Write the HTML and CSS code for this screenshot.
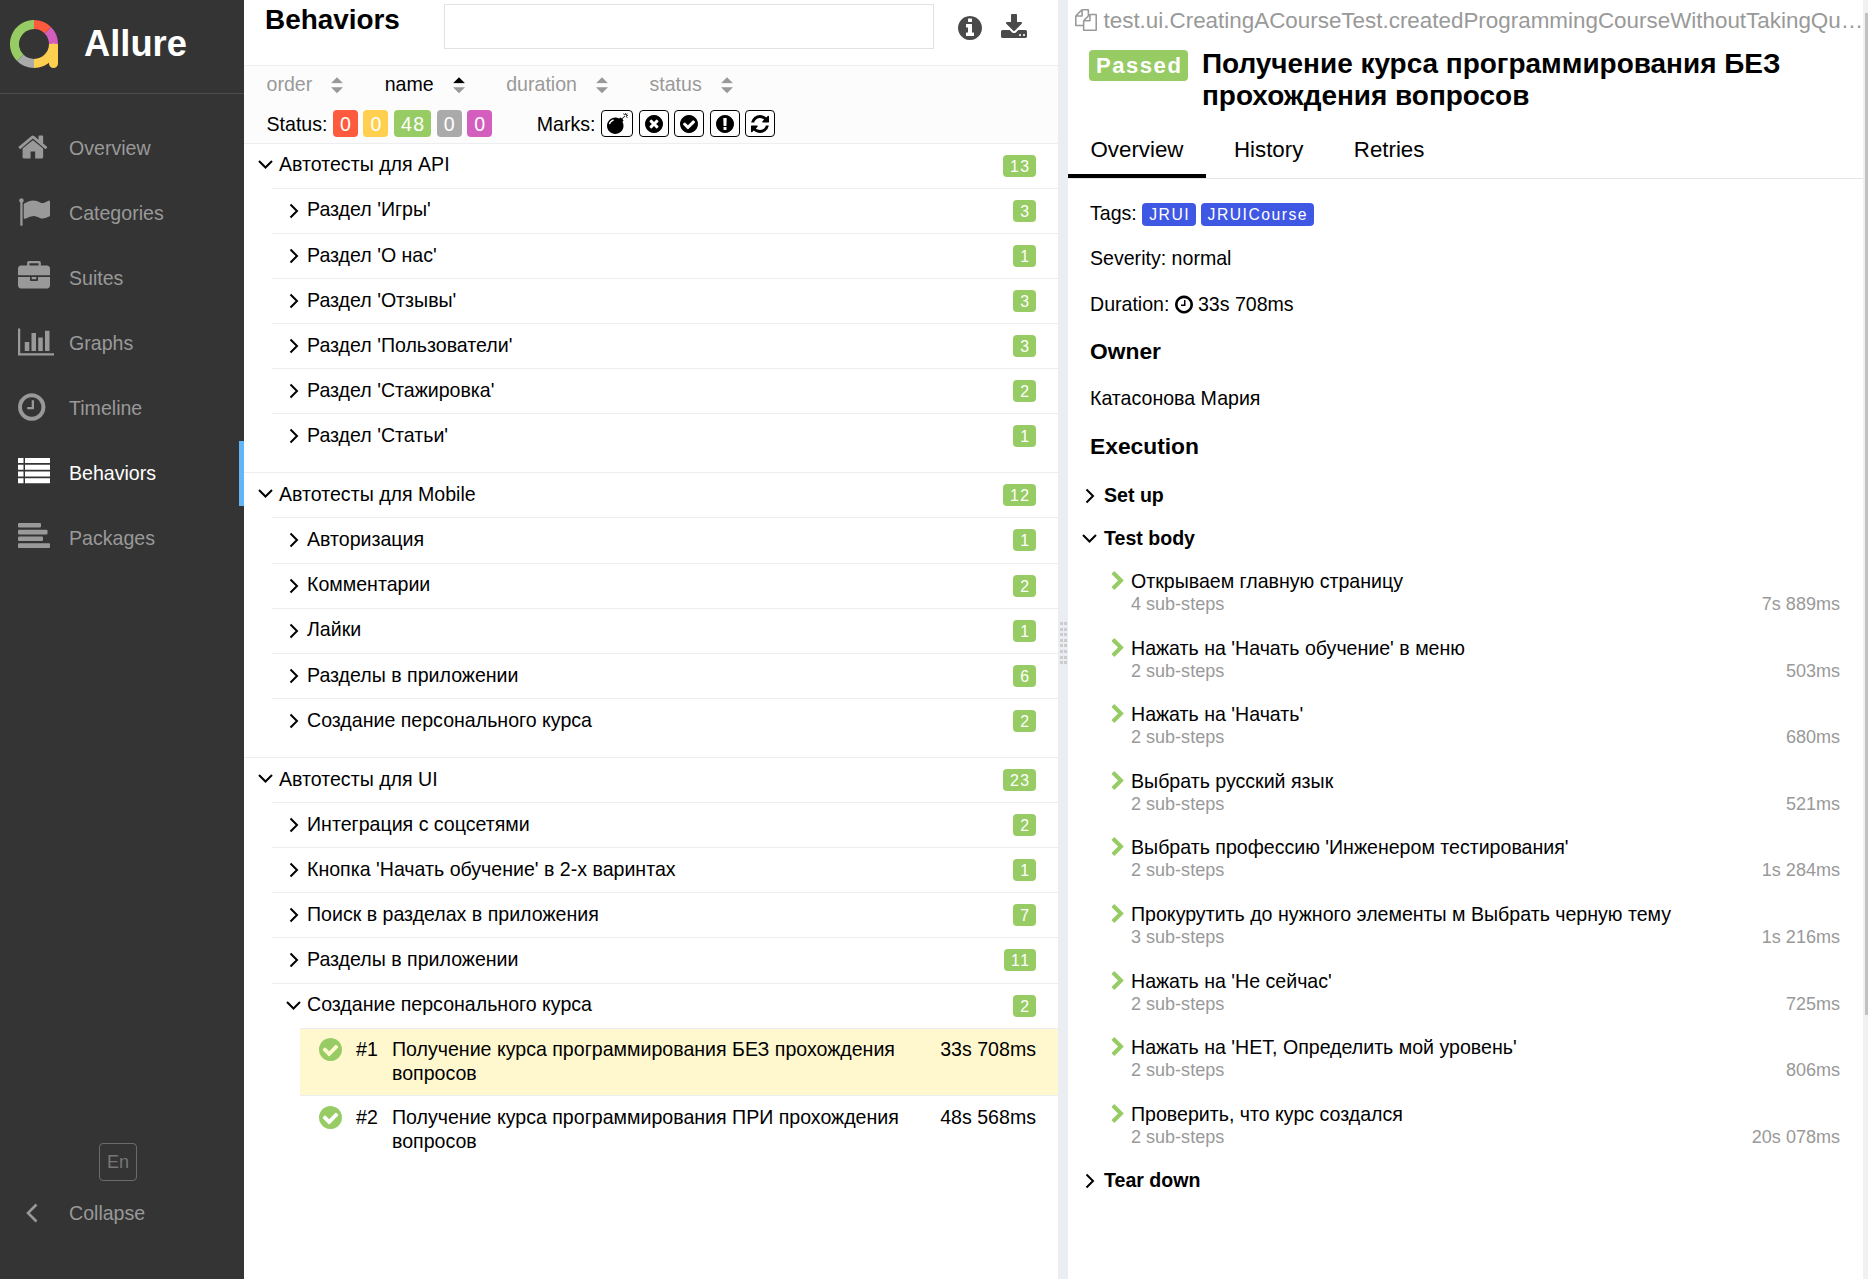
FILE: index.html
```html
<!DOCTYPE html>
<html lang="en">
<head>
<meta charset="utf-8">
<title>Allure Report</title>
<link rel="stylesheet" href="styles.css">
</head>
<body>
<svg class="defs" aria-hidden="true">
  <symbol id="home" viewBox="64 0 1792 1792"><path d="M1472 992v480q0 26-19 45t-45 19h-384v-384h-256v384h-384q-26 0-45-19t-19-45v-480q0-1 .5-3t.5-3l575-474 575 474q1 2 1 6zm223-69l-62 74q-8 9-21 11h-3q-13 0-21-7l-692-577-692 577q-12 8-24 7-13-2-21-11l-62-74q-8-10-7-23.500t11-21.500l719-599q32-26 76-26t76 26l244 204v-195q0-14 9-23t23-9h192q14 0 23 9t9 23v408l219 182q10 8 11 21.500t-7 23.500z"/></symbol>
  <symbol id="flag" viewBox="0 0 1792 1792"><path d="M320 256q0 72-64 110v1266q0 13-9.500 22.500t-22.500 9.500h-64q-13 0-22.500-9.500t-9.500-22.500v-1266q-64-38-64-110 0-53 37.500-90.500t90.500-37.500 90.500 37.500 37.500 90.500zm1472 64v763q0 25-12.500 38.500t-39.500 27.500q-215 116-369 116-61 0-123.500-22t-108.500-48-115.500-48-142.500-22q-192 0-464 146-17 9-33 9-26 0-45-19t-19-45v-742q0-32 31-55 21-14 79-43 236-120 421-120 107 0 200 29t219 88q38 19 88 19 54 0 117.500-21t110-47 88-47 54.500-21q26 0 45 19t19 45z"/></symbol>
  <symbol id="briefcase" viewBox="0 0 1792 1792"><path d="M640 256h512v-128h-512v128zm1152 640v480q0 66-47 113t-113 47h-1472q-66 0-113-47t-47-113v-480h672v160q0 26 19 45t45 19h320q26 0 45-19t19-45v-160h672zm-768 0v128h-256v-128h256zm768-480v384h-1792v-384q0-66 47-113t113-47h352v-160q0-40 28-68t68-28h576q40 0 68 28t28 68v160h352q66 0 113 47t47 113z"/></symbol>
  <symbol id="chart" viewBox="0 0 2048 1792"><path d="M640 896v512h-256v-512h256zm384-512v1024h-256v-1024h256zm1024 1152v128h-2048v-1536h128v1408h1920zm-640-896v768h-256v-768h256zm384-384v1152h-256v-1152h256z"/></symbol>
  <symbol id="clock" viewBox="128 0 1792 1792"><path d="M1024 544v448q0 14-9 23t-23 9h-320q-14 0-23-9t-9-23v-64q0-14 9-23t23-9h224v-352q0-14 9-23t23-9h64q14 0 23 9t9 23zm416 352q0-148-73-273t-198-198-273-73-273 73-198 198-73 273 73 273 198 198 273 73 273-73 198-198 73-273zm224 0q0 209-103 385.500t-279.500 279.500-385.500 103-385.500-103-279.500-279.500-103-385.500 103-385.500 279.500-279.500 385.500-103 385.500 103 279.500 279.500 103 385.500z"/></symbol>
  <symbol id="list" viewBox="0 0 32 32"><path d="M0 2h5.500v5H0zM7 2h25v5H7zM0 8.700h5.500v5H0zM7 8.700h25v5H7zM0 15.500h5.500v5H0zM7 15.500h25v5H7zM0 22.200h5.500v5H0zM7 22.200h25v5H7z"/></symbol>
  <symbol id="align" viewBox="0 0 32 32"><rect y="2" width="23" height="4.600" rx="1"/><rect y="8.800" width="29.500" height="4.600" rx="1"/><rect y="15.500" width="25" height="4.600" rx="1"/><rect y="22.300" width="32" height="4.600" rx="1"/></symbol>
  <symbol id="info" viewBox="128 128 1536 1536"><path d="M1152 1376v-160q0-14-9-23t-23-9h-96v-512q0-14-9-23t-23-9h-320q-14 0-23 9t-9 23v160q0 14 9 23t23 9h96v320h-96q-14 0-23 9t-9 23v160q0 14 9 23t23 9h448q14 0 23-9t9-23zm-128-896v-160q0-14-9-23t-23-9h-192q-14 0-23 9t-9 23v160q0 14 9 23t23 9h192q14 0 23-9t9-23zm640 416q0 209-103 385.500t-279.500 279.500-385.500 103-385.500-103-279.500-279.500-103-385.500 103-385.500 279.500-279.500 385.500-103 385.500 103 279.500 279.500 103 385.500z"/></symbol>
  <symbol id="download" viewBox="64 0 1664 1536"><path d="M1344 1344q0-26-19-45t-45-19-45 19-19 45 19 45 45 19 45-19 19-45zm256 0q0-26-19-45t-45-19-45 19-19 45 19 45 45 19 45-19 19-45zm128-224v320q0 40-28 68t-68 28h-1472q-40 0-68-28t-28-68v-320q0-40 28-68t68-28h465l135 136q58 56 136 56t136-56l136-136h464q40 0 68 28t28 68zm-325-569q17 41-14 70l-448 448q-18 19-45 19t-45-19l-448-448q-31-29-14-70 17-39 59-39h256v-448q0-26 19-45t45-19h256q26 0 45 19t19 45v448h256q42 0 59 39z"/></symbol>
  <symbol id="bomb" viewBox="0 0 1792 1792"><path d="M571 589q-10-25-34-35t-49 0q-108 44-191 127t-127 191q-10 25 0 49t35 34q13 5 24 5 42 0 60-40 34-84 98.500-148.500t148.500-98.500q25-11 35-35t0-49zm942-356l46 46-244 243 68 68q19 19 19 45.500t-19 45.500l-64 64q89 161 89 343 0 143-55.500 273.500t-150 225-225 150-273.500 55.500-273.500-55.500-225-150-150-225-55.500-273.500 55.500-273.500 150-225 225-150 273.500-55.500q182 0 343 89l64-64q19-19 45.500-19t45.500 19l68 68zm8-56q-10 10-22 10-13 0-23-10l-91-90q-9-10-9-23t9-23q10-9 23-9t23 9l90 91q10 9 10 22.500t-10 22.500zm230 230q-11 9-23 9t-23-9l-90-91q-10-9-10-22.500t10-22.500q9-10 22.500-10t22.500 10l91 90q9 10 9 23t-9 23zm41-183q0 14-9 23t-23 9h-96q-14 0-23-9t-9-23 9-23 23-9h96q14 0 23 9t9 23zm-192-192v96q0 14-9 23t-23 9-23-9-9-23v-96q0-14 9-23t23-9 23 9 9 23zm151 55l-91 90q-10 10-22 10-13 0-23-10-10-9-10-22.500t10-22.500l90-91q10-9 23-9t23 9q9 10 9 23t-9 23z"/></symbol>
  <symbol id="times" viewBox="128 128 1536 1536"><path d="M1277 1122q0-26-19-45l-181-181 181-181q19-19 19-45 0-27-19-46l-90-90q-19-19-46-19-26 0-45 19l-181 181-181-181q-19-19-45-19-27 0-46 19l-90 90q-19 19-19 46 0 26 19 45l181 181-181 181q-19 19-19 45 0 27 19 46l90 90q19 19 46 19 26 0 45-19l181-181 181 181q19 19 45 19 27 0 46-19l90-90q19-19 19-46zm387-226q0 209-103 385.500t-279.500 279.500-385.500 103-385.500-103-279.500-279.500-103-385.500 103-385.500 279.500-279.500 385.500-103 385.500 103 279.500 279.500 103 385.500z"/></symbol>
  <symbol id="check" viewBox="128 128 1536 1536"><path d="M1412 734q0-28-18-46l-91-90q-19-19-45-19t-45 19l-408 407-226-226q-19-19-45-19t-45 19l-91 90q-18 18-18 46 0 27 18 45l362 362q19 19 45 19 27 0 46-19l543-543q18-18 18-45zm252 162q0 209-103 385.500t-279.500 279.500-385.500 103-385.500-103-279.500-279.500-103-385.500 103-385.500 279.500-279.500 385.500-103 385.500 103 279.500 279.500 103 385.500z"/></symbol>
  <symbol id="exclaim" viewBox="128 128 1536 1536"><path d="M896 128q209 0 385.500 103t279.500 279.500 103 385.500-103 385.500-279.500 279.500-385.500 103-385.500-103-279.500-279.500-103-385.500 103-385.500 279.500-279.500 385.500-103zm128 1247v-190q0-14-9-23.500t-22-9.500h-192q-13 0-23 10t-10 23v190q0 13 10 23t23 10h192q13 0 22-9.500t9-23.500zm-2-344l18-621q0-12-10-18-10-8-24-8h-220q-14 0-24 8-10 6-10 18l17 621q0 10 10 17.500t24 7.500h185q14 0 23.500-7.500t10.500-17.500z"/></symbol>
  <symbol id="refresh" viewBox="128 128 1536 1536"><path d="M1639 1056q0 5-1 7-64 268-268 434.500t-478 166.500q-146 0-282.500-55t-243.500-157l-129 129q-19 19-45 19t-45-19-19-45v-448q0-26 19-45t45-19h448q26 0 45 19t19 45-19 45l-137 137q71 66 161 102t187 36q134 0 250-65t186-179q11-17 53-117 8-23 30-23h192q13 0 22.500 9.500t9.500 22.500zm25-800v448q0 26-19 45t-45 19h-448q-26 0-45-19t-19-45 19-45l138-138q-148-137-349-137-134 0-250 65t-186 179q-11 17-53 117-8 23-30 23h-199q-13 0-22.500-9.500t-9.500-22.500v-7q65-268 270-434.500t480-166.500q146 0 284 55.500t245 156.500l130-129q19-19 45-19t45 19 19 45z"/></symbol>
  <symbol id="files" viewBox="0 0 1792 1792"><path d="M1696 384q40 0 68 28t28 68v1216q0 40-28 68t-68 28h-960q-40 0-68-28t-28-68v-288h-544q-40 0-68-28t-28-68v-672q0-40 20-88t48-76l408-408q28-28 76-48t88-20h416q40 0 68 28t28 68v328q68-40 128-40h416zm-544 213l-299 299h299v-299zm-640-384l-299 299h299v-299zm196 647l316-316v-416h-384v416q0 40-28 68t-68 28h-416v640h512v-256q0-40 20-88t48-76zm956 804v-1152h-384v416q0 40-28 68t-68 28h-416v640h896z"/></symbol>
  <symbol id="chevron" viewBox="410 0 970 1664"><path d="M1363 877l-742 742q-19 19-45 19t-45-19l-166-166q-19-19-19-45t19-45l531-531-531-531q-19-19-19-45t19-45l166-166q19-19 45-19t45 19l742 742q19 19 19 45t-19 45z"/></symbol>
  <symbol id="right" viewBox="0 0 15 16"><path class="line" d="M4.500 1.500L11 8l-6.500 6.500"/></symbol>
  <symbol id="down" viewBox="0 0 15 16"><path class="line" d="M1 4l6.500 6.500L14 4"/></symbol>
  <symbol id="left" viewBox="0 0 12 20"><path class="line bold" d="M10.500 1.500L2 10l8.500 8.500"/></symbol>
  <symbol id="up-tri" viewBox="0 0 12 6"><path d="M6 0l6 6H0z"/></symbol>
  <symbol id="down-tri" viewBox="0 0 12 6"><path d="M6 6l6-6H0z"/></symbol>
</svg>
<div class="app">
  <aside class="sidebar">
    <div class="brand">
      <svg class="logo" viewBox="0 0 48 48">
        <g fill="none" stroke-width="9">
          <path stroke="#97cc64" d="M24 4.500A19.500 19.500 0 0 0 10.200 37.800"/>
          <path stroke="#aaa" d="M10.200 37.800A19.500 19.500 0 0 0 24 43.500"/>
          <path stroke="#ffd050" d="M24 43.500A19.500 19.500 0 0 0 43.500 24"/>
          <path stroke="#d35ebe" d="M43.500 24A19.500 19.500 0 0 0 37.800 10.200"/>
          <path stroke="#fd5a3e" d="M37.800 10.200A19.500 19.500 0 0 0 24 4.500"/>
          <path stroke="#ffd050" stroke-linecap="round" d="M43.500 28V43.500"/>
        </g>
        <path fill="#ffd050" d="M39 24h9v8h-9z"/>
      </svg>
      <span class="brand-name">Allure</span>
    </div>
    <nav class="nav">
      <a class="nav-item"><svg class="nav-icon"><use href="#home"/></svg>Overview</a>
      <a class="nav-item"><svg class="nav-icon"><use href="#flag"/></svg>Categories</a>
      <a class="nav-item"><svg class="nav-icon"><use href="#briefcase"/></svg>Suites</a>
      <a class="nav-item"><svg class="nav-icon wide"><use href="#chart"/></svg>Graphs</a>
      <a class="nav-item"><svg class="nav-icon"><use href="#clock"/></svg>Timeline</a>
      <a class="nav-item active"><svg class="nav-icon"><use href="#list"/></svg>Behaviors</a>
      <a class="nav-item"><svg class="nav-icon"><use href="#align"/></svg>Packages</a>
    </nav>
    <div class="side-footer">
      <span class="lang">En</span>
      <a class="collapse"><svg class="collapse-icon"><use href="#left"/></svg>Collapse</a>
    </div>
  </aside>

  <main class="tree-pane">
    <header class="pane-head">
      <h1 class="pane-title">Behaviors</h1>
      <input class="search" type="text">
      <svg class="head-icon info"><use href="#info"/></svg>
      <svg class="head-icon download"><use href="#download"/></svg>
    </header>
    <section class="filters">
      <div class="sorters">
        <span class="sorter">order<span class="arrows"><svg><use href="#up-tri"/></svg><svg><use href="#down-tri"/></svg></span></span>
        <span class="sorter on">name<span class="arrows"><svg><use href="#up-tri"/></svg><svg><use href="#down-tri"/></svg></span></span>
        <span class="sorter">duration<span class="arrows"><svg><use href="#up-tri"/></svg><svg><use href="#down-tri"/></svg></span></span>
        <span class="sorter">status<span class="arrows"><svg><use href="#up-tri"/></svg><svg><use href="#down-tri"/></svg></span></span>
      </div>
      <div class="marks">
        <span class="marks-label">Status:</span>
        <span class="stat failed">0</span><span class="stat broken">0</span><span class="stat passed">48</span><span class="stat skipped">0</span><span class="stat unknown">0</span>
        <span class="marks-label second">Marks:</span>
        <span class="mark big"><svg><use href="#bomb"/></svg></span><span class="mark"><svg><use href="#times"/></svg></span><span class="mark"><svg><use href="#check"/></svg></span><span class="mark"><svg><use href="#exclaim"/></svg></span><span class="mark"><svg><use href="#refresh"/></svg></span>
      </div>
    </section>
    <div class="tree">
      <section class="group">
        <div class="row snug"><svg class="arrow"><use href="#down"/></svg><span class="name">Автотесты для API</span><span class="count">13</span></div>
        <div class="children">
          <div class="row snug"><svg class="arrow"><use href="#right"/></svg><span class="name">Раздел 'Игры'</span><span class="count">3</span></div>
          <div class="row"><svg class="arrow"><use href="#right"/></svg><span class="name">Раздел 'О нас'</span><span class="count">1</span></div>
          <div class="row"><svg class="arrow"><use href="#right"/></svg><span class="name">Раздел 'Отзывы'</span><span class="count">3</span></div>
          <div class="row"><svg class="arrow"><use href="#right"/></svg><span class="name">Раздел 'Пользователи'</span><span class="count">3</span></div>
          <div class="row"><svg class="arrow"><use href="#right"/></svg><span class="name">Раздел 'Стажировка'</span><span class="count">2</span></div>
          <div class="row"><svg class="arrow"><use href="#right"/></svg><span class="name">Раздел 'Статьи'</span><span class="count">1</span></div>
        </div>
      </section>
      <section class="group">
        <div class="row"><svg class="arrow"><use href="#down"/></svg><span class="name">Автотесты для Mobile</span><span class="count">12</span></div>
        <div class="children">
          <div class="row tall"><svg class="arrow"><use href="#right"/></svg><span class="name">Авторизация</span><span class="count">1</span></div>
          <div class="row snug"><svg class="arrow"><use href="#right"/></svg><span class="name">Комментарии</span><span class="count">2</span></div>
          <div class="row snug"><svg class="arrow"><use href="#right"/></svg><span class="name">Лайки</span><span class="count">1</span></div>
          <div class="row"><svg class="arrow"><use href="#right"/></svg><span class="name">Разделы в приложении</span><span class="count">6</span></div>
          <div class="row"><svg class="arrow"><use href="#right"/></svg><span class="name">Создание персонального курса</span><span class="count">2</span></div>
        </div>
      </section>
      <section class="group">
        <div class="row"><svg class="arrow"><use href="#down"/></svg><span class="name">Автотесты для UI</span><span class="count">23</span></div>
        <div class="children">
          <div class="row"><svg class="arrow"><use href="#right"/></svg><span class="name">Интеграция с соцсетями</span><span class="count">2</span></div>
          <div class="row"><svg class="arrow"><use href="#right"/></svg><span class="name">Кнопка 'Начать обучение' в 2-х варинтах</span><span class="count">1</span></div>
          <div class="row"><svg class="arrow"><use href="#right"/></svg><span class="name">Поиск в разделах в приложения</span><span class="count">7</span></div>
          <div class="row tall"><svg class="arrow"><use href="#right"/></svg><span class="name">Разделы в приложении</span><span class="count">11</span></div>
          <div class="row snug"><svg class="arrow"><use href="#down"/></svg><span class="name">Создание персонального курса</span><span class="count">2</span></div>
          <div class="children">
            <div class="leaf selected"><svg class="ok"><use href="#check"/></svg><span class="num">#1</span><span class="leaf-name">Получение курса программирования БЕЗ прохождения вопросов</span><span class="time">33s 708ms</span></div>
            <div class="leaf"><svg class="ok"><use href="#check"/></svg><span class="num">#2</span><span class="leaf-name">Получение курса программирования ПРИ прохождения вопросов</span><span class="time">48s 568ms</span></div>
          </div>
        </div>
      </section>
    </div>
  </main>

  <div class="gutter"><div class="grip"></div></div>

  <article class="details">
    <div class="fullname"><svg class="files"><use href="#files"/></svg><span class="fullname-text">test.ui.CreatingACourseTest.createdProgrammingCourseWithoutTakingQu…</span></div>
    <div class="case-head">
      <span class="verdict">Passed</span>
      <h2 class="case-title">Получение курса программирования БЕЗ<br>прохождения вопросов</h2>
    </div>
    <div class="tabs"><span class="tab current">Overview</span><span class="tab">History</span><span class="tab">Retries</span></div>
    <div class="facts">
      <div class="fact">Tags: <span class="tag">JRUI</span><span class="tag">JRUICourse</span></div>
      <div class="fact">Severity: normal</div>
      <div class="fact last">Duration: <svg class="dur-icon"><use href="#clock"/></svg>33s 708ms</div>
      <h3 class="sub-title owner">Owner</h3>
      <div class="owner-name">Катасонова Мария</div>
      <h3 class="sub-title">Execution</h3>
    </div>
    <div class="execution">
      <div class="stage"><svg class="arrow"><use href="#right"/></svg>Set up</div>
      <div class="stage"><svg class="arrow"><use href="#down"/></svg>Test body</div>
      <div class="steps">
        <div class="step"><svg class="step-icon"><use href="#chevron"/></svg><div class="step-body"><div class="step-name">Открываем главную страницу</div><div class="step-meta"><span>4 sub-steps</span><span>7s 889ms</span></div></div></div>
        <div class="step"><svg class="step-icon"><use href="#chevron"/></svg><div class="step-body"><div class="step-name">Нажать на 'Начать обучение' в меню</div><div class="step-meta"><span>2 sub-steps</span><span>503ms</span></div></div></div>
        <div class="step"><svg class="step-icon"><use href="#chevron"/></svg><div class="step-body"><div class="step-name">Нажать на 'Начать'</div><div class="step-meta"><span>2 sub-steps</span><span>680ms</span></div></div></div>
        <div class="step"><svg class="step-icon"><use href="#chevron"/></svg><div class="step-body"><div class="step-name">Выбрать русский язык</div><div class="step-meta"><span>2 sub-steps</span><span>521ms</span></div></div></div>
        <div class="step"><svg class="step-icon"><use href="#chevron"/></svg><div class="step-body"><div class="step-name">Выбрать профессию 'Инженером тестирования'</div><div class="step-meta"><span>2 sub-steps</span><span>1s 284ms</span></div></div></div>
        <div class="step"><svg class="step-icon"><use href="#chevron"/></svg><div class="step-body"><div class="step-name">Прокурутить до нужного элементы м Выбрать черную тему</div><div class="step-meta"><span>3 sub-steps</span><span>1s 216ms</span></div></div></div>
        <div class="step"><svg class="step-icon"><use href="#chevron"/></svg><div class="step-body"><div class="step-name">Нажать на 'Не сейчас'</div><div class="step-meta"><span>2 sub-steps</span><span>725ms</span></div></div></div>
        <div class="step"><svg class="step-icon"><use href="#chevron"/></svg><div class="step-body"><div class="step-name">Нажать на 'НЕТ, Определить мой уровень'</div><div class="step-meta"><span>2 sub-steps</span><span>806ms</span></div></div></div>
        <div class="step"><svg class="step-icon"><use href="#chevron"/></svg><div class="step-body"><div class="step-name">Проверить, что курс создался</div><div class="step-meta"><span>2 sub-steps</span><span>20s 078ms</span></div></div></div>
      </div>
      <div class="stage"><svg class="arrow"><use href="#right"/></svg>Tear down</div>
    </div>
  </article>
  <div class="scrollbar"><div class="thumb"></div></div>
</div>
</body>
</html>
```

FILE: styles.css
```css
* { box-sizing: border-box; }
body {
  margin: 0;
  font: 19.580px/24px "Liberation Sans", Arial, sans-serif;
  color: #000;
  background: #fff;
}
h1, h2, h3 { margin: 0; }
svg { display: block; flex: none; fill: currentColor; }
.defs { position: absolute; width: 0; height: 0; }
.line { fill: none; stroke: currentColor; stroke-width: 2; }
.line.bold { stroke-width: 2.600; }
.app { display: flex; height: 1279px; overflow: hidden; }

/* Sidebar */
.sidebar { display: flex; flex-direction: column; width: 244px; flex: none; background: #343434; color: #999; }
.brand { display: flex; height: 94px; padding: 20px 0 0 10px; border-bottom: 1px solid #4d4d4d; }
.logo { width: 48px; height: 48px; }
.brand-name { margin: 4px 0 0 26px; font-size: 36.300px; line-height: 40px; font-weight: bold; color: #fff; }
.nav { padding-top: 22px; }
.nav-item { display: flex; height: 65px; padding: 15px 0 0 18px; line-height: 34px; }
.nav-item.active { color: #fff; border-right: 5px solid #64b5f6; }
.nav-icon { width: 32px; height: 32px; margin-right: 19px; }
.nav-icon.wide { width: 36px; margin-right: 15px; }
.side-footer { margin-top: auto; height: 136px; }
.lang { display: block; width: 38px; height: 38px; margin-left: 99px; border: 1px solid #6b6b6b; border-radius: 4px; font-size: 18px; line-height: 36px; text-align: center; color: #777; }
.collapse { display: flex; align-items: center; margin-top: 20px; padding-left: 26px; }
.collapse-icon { width: 12px; height: 20px; margin-right: 31px; }

/* Tree pane */
.tree-pane { width: 814px; flex: none; }
.pane-head { display: flex; height: 65px; padding: 4px 31px 0 21px; }
.pane-title { width: 179px; font-size: 27.900px; line-height: 31px; }
.search { width: 490px; height: 45px; padding: 0; border: 1px solid #e2e2e2; background: #fff; }
.head-icon { color: #4a4a4a; }
.head-icon.info { width: 24px; height: 24px; margin: 12px 0 0 24px; }
.head-icon.download { width: 26px; height: 24px; margin: 10px 0 0 19px; }
.filters { height: 78px; padding: 7px 0 0 22.500px; border-top: 1px solid #eceff1; background: #fcfcfc; }
.sorters { display: flex; gap: 41.500px; height: 37px; color: #999; }
.sorter { display: flex; line-height: 22px; }
.sorter.on, .sorter.on .arrows svg:first-child { color: #000; }
.arrows { display: flex; flex-direction: column; gap: 3px; margin: 4px 0 0 19px; color: #999; }
.arrows svg { width: 12px; height: 6.500px; }
.marks { display: flex; line-height: 28px; }
.marks-label { margin-right: 5.500px; }
.marks-label.second { margin-left: 39px; }
.stat { height: 27px; margin-right: 5.600px; padding: 0 5.500px 0 7px; border-radius: 4px; letter-spacing: 1.500px; color: #fff; }
.failed { background: #fd5a3e; }
.broken { background: #ffd050; }
.passed { background: #97cc64; }
.skipped { background: #aaa; }
.unknown { background: #d35ebe; }
.mark { display: flex; align-items: center; justify-content: center; width: 30px; height: 27px; margin-right: 5.400px; border: 1px solid #000; border-radius: 4px; background: #fff; }
.mark svg { width: 18px; height: 18px; }
.mark.big { width: 32px; margin-right: 6px; }
.mark.big svg { width: 21px; height: 21px; }
.group { padding-bottom: 14px; border-top: 1px solid #eceff1; }
.row { display: flex; height: 44px; padding: 8px 22px 0 14px; }
.arrow { width: 15px; height: 16px; margin: 5px 6px 0 0; }
.name { flex: 1; padding-top: 1px; }
.snug .name { padding-top: 0; }
.count { height: 22px; margin-top: 3px; padding: 0 5.500px 0 7px; border-radius: 4px; font-size: 15.800px; line-height: 23px; letter-spacing: 1.500px; color: #fff; background: #97cc64; }
.children { margin-left: 28px; }
.children > .row { height: 45px; border-top: 1px solid #eceff1; }
.children > .row.tall { height: 46px; }
.children .arrow { margin-top: 6px; }
.leaf { display: flex; height: 67px; padding: 8px 22px 0 19px; border-top: 1px solid #eceff1; }
.leaf.selected { background: #fff8ce; }
.leaf + .leaf { height: 68px; padding-top: 9px; }
.ok { width: 23px; height: 23px; margin-top: 1px; color: #97cc64; }
.num { width: 36px; margin-left: 14px; }
.leaf-name { width: 530px; }
.time { margin-left: auto; }

/* Splitter */
.gutter { display: flex; align-items: center; width: 10px; flex: none; padding: 7px 0 0 2px; background: #eaeef2; }
.grip { width: 7px; height: 42px; background: repeating-linear-gradient(to bottom, transparent 0 3px, #eaeef2 3px 5.600px), linear-gradient(to right, #ccc 3px, #eaeef2 3px 4px, #ccc 4px); }

/* Details pane */
.details { width: 795px; flex: none; }
.fullname { display: flex; height: 43px; padding: 9px 0 0 7px; color: #999; }
.files { width: 22px; height: 22px; margin-right: 6.500px; }
.fullname-text { margin-top: -1px; font-size: 22.420px; line-height: 26px; white-space: nowrap; }
.case-head { display: flex; height: 87px; padding: 4px 0 0 21px; }
.verdict { width: 99px; height: 31px; margin: 3px 14px 0 0; padding-left: 7px; border-radius: 4px; font-size: 22.100px; line-height: 31px; font-weight: bold; letter-spacing: 1.500px; color: #fff; background: #97cc64; }
.case-title { padding-top: 1px; font-size: 27.950px; line-height: 32px; }
.tabs { display: flex; gap: 5.500px; height: 49px; border-bottom: 1px solid #e5e5e5; font-size: 22.300px; }
.tab { height: 48px; padding: 8px 22.500px 0; }
.tab.current { border-bottom: 4px solid #000; }
.facts { padding: 22px 0 0 22px; }
.fact { display: flex; height: 46px; white-space: pre; }
.fact:first-child { height: 45px; }
.fact.last { height: 47px; }
.tag { height: 23px; margin: 2px 5px 0 0; padding: 0 5.500px 0 7px; border-radius: 4px; font-size: 15.700px; line-height: 23px; letter-spacing: 1.500px; color: #fff; background: #3f58e3; }
.dur-icon { width: 21px; height: 21px; margin: 2px 2px 0 0; }
.sub-title { height: 49px; font-size: 22.800px; line-height: 24px; }
.sub-title.owner { height: 47px; }
.owner-name { height: 48px; }
.execution { padding-left: 14px; }
.stage { display: flex; height: 43px; font-weight: bold; }
.stage .arrow { margin: 5px 7px 0 0; }
.steps { padding-left: 30px; }
.step { display: flex; height: 66.600px; }
.step-icon { width: 12px; height: 19px; margin: 2px 7px 0 0; color: #97cc64; }
.step-body { flex: 1; padding-right: 23px; }
.step-meta { display: flex; justify-content: space-between; font-size: 18.050px; line-height: 22px; color: #999; }

/* Scrollbar */
.scrollbar { width: 5px; flex: none; padding: 13px 0 0 2px; background: #f1f1f1; }
.thumb { height: 1002px; background: #c1c1c1; }
```
